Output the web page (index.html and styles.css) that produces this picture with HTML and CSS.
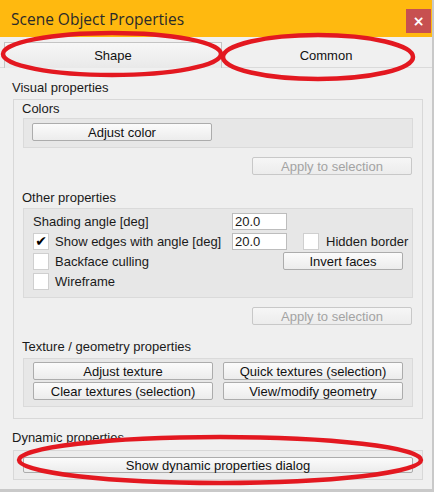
FILE: index.html
```html
<!DOCTYPE html>
<html>
<head>
<meta charset="utf-8">
<link rel="stylesheet" href="styles.css">
</head>
<body>
<div class="window">
  <div class="titlebar">
    <span class="title">Scene Object Properties</span>
    <span class="close">×</span>
  </div>
  <div class="tabs">
    <div class="tab active">Shape</div>
    <div class="tab">Common</div>
  </div>
  <div class="content">
    <div class="label top-label">Visual properties</div>
    <div class="group outer">
      <div class="label sub-label">Colors</div>
      <div class="group inner colors">
        <button class="btn w180">Adjust color</button>
      </div>
      <div class="apply-row"><button class="btn disabled w160">Apply to selection</button></div>

      <div class="label sub-label other">Other properties</div>
      <div class="group inner other-box">
        <div class="grid">
          <span class="txt">Shading angle [deg]</span>
          <span class="input">20.0</span>
          <span></span>
          <span class="chk-row"><span class="chk checked">✔</span><span class="txt">Show edges with angle [deg]</span></span>
          <span class="input">20.0</span>
          <span class="chk-row hb"><span class="chk"></span><span class="txt">Hidden border</span></span>
          <span class="chk-row"><span class="chk"></span><span class="txt">Backface culling</span></span>
          <span></span>
          <button class="btn w120 invert">Invert faces</button>
          <span class="chk-row"><span class="chk"></span><span class="txt">Wireframe</span></span>
        </div>
      </div>
      <div class="apply-row"><button class="btn disabled w160">Apply to selection</button></div>

      <div class="label sub-label tex">Texture / geometry properties</div>
      <div class="group inner tex-box">
        <div class="btn-grid">
          <button class="btn">Adjust texture</button>
          <button class="btn">Quick textures (selection)</button>
          <button class="btn">Clear textures (selection)</button>
          <button class="btn">View/modify geometry</button>
        </div>
      </div>
    </div>
    <div class="label dyn-label">Dynamic properties</div>
    <div class="group dyn-box">
      <button class="btn wide">Show dynamic properties dialog</button>
    </div>
  </div>
  <svg class="marks" width="434" height="492" viewBox="0 0 434 492">
    <ellipse cx="112" cy="54" rx="109" ry="21" />
    <ellipse cx="318" cy="57" rx="95" ry="22" />
    <ellipse cx="220" cy="460" rx="201" ry="23" />
  </svg>
</div>
</body>
</html>
```

FILE: styles.css
```css
html, body {
  margin: 0;
  padding: 0;
}
body {
  background: #f0f0f0;
  font-family: "Liberation Sans", Arial, sans-serif;
  font-size: 13px;
  color: #1a1a1a;
}
.window {
  position: relative;
  width: 432px;
  height: 489px;
  background: #f0f0f0;
  border-right: 2px solid #c9c9c9;
  border-bottom: 3px solid #c9c9c9;
  overflow: hidden;
}
.titlebar {
  height: 37px;
  background: #ffb90f;
  display: flex;
  align-items: center;
  justify-content: space-between;
  padding-left: 11px;
  box-sizing: border-box;
}
.title {
  font-family: "Open Sans", "Noto Sans", sans-serif;
  font-size: 15.5px;
  color: #2a2a2a;
  margin-top: 1px;
}
.close {
  width: 25px;
  height: 24px;
  margin-right: 1px;
  margin-top: 5px;
  background: #c75050;
  color: #fff;
  font-family: "DejaVu Sans", sans-serif;
  font-size: 14px;
  font-weight: bold;
  display: flex;
  align-items: center;
  justify-content: center;
}
.tabs {
  height: 31px;
  box-sizing: border-box;
  padding: 5px 0 0 4px;
  display: flex;
  border-bottom: 1px solid #dadada;
}
.tab {
  width: 208px;
  height: 26px;
  box-sizing: border-box;
  display: flex;
  align-items: center;
  justify-content: center;
  color: #111;
}
.tab.active {
  width: 218px;
  background: linear-gradient(#f7f7f7, #e9e9e9);
  border: 1px solid #c4c4c4;
  border-bottom: none;
}
.content {
  padding: 0 9px 0 13px;
}
.label {
  height: 17px;
  line-height: 17px;
  white-space: nowrap;
}
.top-label {
  margin: 11px 0 3px -1px;
}
.group {
  box-sizing: border-box;
  border: 1px solid #d8d8d8;
}
.outer {
  width: 410px;
  height: 320px;
  padding: 0 9px;
  background: #efefef;
}
.inner {
  background: #e7e7e7;
  border-color: #dadada;
}
.sub-label {
  margin: 0 0 1px -1px;
}
.colors {
  height: 30px;
  padding: 4px 8px;
}
.btn {
  display: flex;
  align-items: center;
  justify-content: center;
  height: 18px;
  box-sizing: border-box;
  padding: 0;
  margin: 0;
  border: 1px solid #acacac;
  border-radius: 2px;
  background: linear-gradient(#fbfbfb, #ececec);
  font-family: "Liberation Sans", Arial, sans-serif;
  font-size: 13px;
  color: #111;
}
.btn.disabled {
  color: #a3a3a3;
  border-color: #c8c8c8;
  background: linear-gradient(#f6f6f6, #ececec);
}
.w180 { width: 180px; }
.w160 { width: 160px; }
.w120 { width: 120px; }
.apply-row {
  display: flex;
  justify-content: flex-end;
  margin-top: 9px;
  padding-right: 1px;
}
.other {
  margin-top: 14px;
  margin-bottom: 2px;
}
.other-box {
  height: 90px;
  padding: 2px 9px 0;
}
.grid {
  display: grid;
  grid-template-columns: 199px 71px 100px;
  grid-template-rows: 20px 20px 20px 20px;
  align-items: center;
}
.txt {
  white-space: nowrap;
}
.input {
  width: 55px;
  height: 17px;
  box-sizing: border-box;
  background: #fff;
  border: 1px solid #bdbdbd;
  padding-left: 2px;
  line-height: 15px;
}
.chk-row {
  display: flex;
  align-items: center;
  gap: 6px;
  white-space: nowrap;
}
.chk {
  flex-shrink: 0;
  width: 16px;
  height: 17px;
  box-sizing: border-box;
  background: #fff;
  border: 1px solid #cfcfcf;
  display: flex;
  align-items: center;
  justify-content: center;
  font-family: "DejaVu Sans", sans-serif;
  font-size: 14px;
  color: #000;
}
.hb {
  gap: 7px;
}
.invert {
  margin-left: -20px;
}
.tex {
  margin-top: 13px;
  margin-bottom: 3px;
}
.tex-box {
  height: 49px;
  padding: 3px 9px;
}
.btn-grid {
  display: grid;
  grid-template-columns: 180px 180px;
  column-gap: 10px;
  row-gap: 2px;
}
.btn-grid .btn {
  width: 180px;
}
.dyn-label {
  margin: 10px 0 4px -1px;
}
.dyn-box {
  width: 410px;
  height: 30px;
  padding: 6px 9px;
  background: #ececec;
}
.wide {
  width: 390px;
  height: 16px;
}
.marks {
  position: absolute;
  left: 0;
  top: 0;
  pointer-events: none;
}
.marks ellipse {
  fill: none;
  stroke: #e31820;
  stroke-width: 4.5;
}
```
